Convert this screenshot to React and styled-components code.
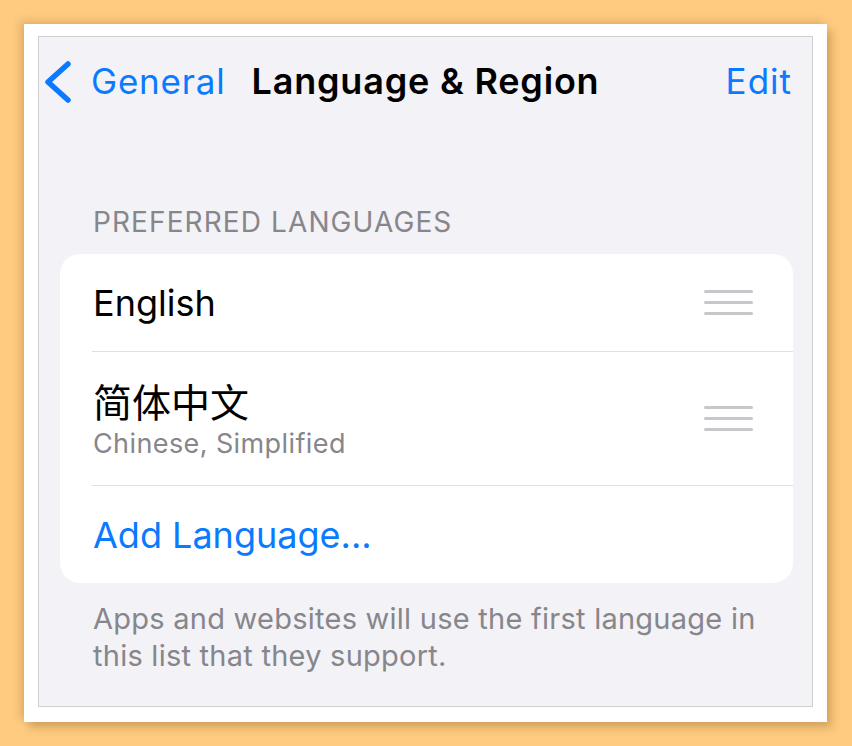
import React from "react"
import styled, { createGlobalStyle } from "styled-components"

const GlobalStyle = createGlobalStyle`
  html, body {
    margin: 0;
    padding: 0;
    background: #fecb80;
  }
  #root {
    height: 746px;
  }
  * {
    box-sizing: border-box;
  }
`

const Page = styled.div`
  width: 852px;
  height: 746px;
  padding: 24px 0 0 24px;
  font-family: Inter, "Noto Sans CJK SC", sans-serif;
`

const Frame = styled.div`
  width: 803px;
  height: 698px;
  background: #ffffff;
  padding: 12px 14px 15px 14px;
  box-shadow: -4px -3px 8px rgba(120, 80, 20, 0.22), 5px 6px 8px rgba(120, 80, 20, 0.28);
`

const Panel = styled.div`
  height: 100%;
  background: #f2f2f7;
  border: 1px solid #cfcfd2;
  display: flex;
  flex-direction: column;
`

const Header = styled.div`
  height: 88px;
  display: grid;
  grid-template-columns: 1fr auto 1fr;
  align-items: center;
  padding: 0 20px;
`

const BackButton = styled.div`
  display: flex;
  align-items: center;
  gap: 16px;
  margin-left: -14px;
  color: #0a7aff;
  font-size: 35px;
  letter-spacing: 0.8px;
`

const Title = styled.div`
  font-size: 36px;
  font-weight: 600;
  color: #000;
  letter-spacing: 0.8px;
`

const EditButton = styled.div`
  justify-self: end;
  color: #0a7aff;
  font-size: 35px;
  letter-spacing: 1px;
`

const SectionLabel = styled.div`
  margin: 79px 0 0 54px;
  font-size: 28px;
  line-height: 36px;
  color: #86868b;
  letter-spacing: 1.1px;
`

const Card = styled.div`
  margin: 14px 19px 0 21px;
  background: #ffffff;
  border-radius: 20px;
  overflow: hidden;
`

const Row = styled.div`
  height: ${(p) => p.$height}px;
  display: flex;
  align-items: center;
  justify-content: space-between;
  padding: 0 40px 0 33px;

  & + & {
    border-top: 1px solid #e0e0e3;
    margin-left: 32px;
    padding-left: 1px;
  }
`

const Labels = styled.div`
  display: flex;
  flex-direction: column;
`

const Primary = styled.div`
  font-size: ${(p) => (p.$cjk ? 39 : 36)}px;
  line-height: ${(p) => (p.$cjk ? 48 : 44)}px;
  color: ${(p) => (p.$link ? "#0a7aff" : "#000")};
  font-family: ${(p) => (p.$cjk ? '"Noto Sans CJK SC", sans-serif' : "Inter, sans-serif")};
`

const Secondary = styled.div`
  margin-top: 3px;
  font-size: 27px;
  line-height: 34px;
  color: #86868b;
  letter-spacing: 0.4px;
`

const Handle = styled.div`
  width: 49px;
  display: flex;
  flex-direction: column;
  gap: 8px;
`

const HandleLine = styled.span`
  display: block;
  height: 3px;
  border-radius: 2px;
  background: #c7c7cc;
`

const Footer = styled.div`
  margin: 17px 40px 0 54px;
  font-size: 29px;
  line-height: 37px;
  color: #86868b;
  letter-spacing: 0.25px;
`

const Chevron = () => (
  <svg width="30" height="46" viewBox="0 0 30 46">
    <polyline
      points="23,6 3,24 23,42"
      fill="none"
      stroke="#0a7aff"
      strokeWidth="5.5"
      strokeLinecap="round"
      strokeLinejoin="round"
    />
  </svg>
)

const DragHandle = () => (
  <Handle>
    <HandleLine />
    <HandleLine />
    <HandleLine />
  </Handle>
)

const App = () => {
  return (
    <Page>
      <GlobalStyle />
      <Frame>
        <Panel>
          <Header>
            <BackButton>
              <Chevron />
              General
            </BackButton>
            <Title>Language &amp; Region</Title>
            <EditButton>Edit</EditButton>
          </Header>
          <SectionLabel>PREFERRED LANGUAGES</SectionLabel>
          <Card>
            <Row $height={97}>
              <Labels>
                <Primary>English</Primary>
              </Labels>
              <DragHandle />
            </Row>
            <Row $height={134}>
              <Labels>
                <Primary $cjk>简体中文</Primary>
                <Secondary>Chinese, Simplified</Secondary>
              </Labels>
              <DragHandle />
            </Row>
            <Row $height={98}>
              <Labels>
                <Primary $link>Add Language...</Primary>
              </Labels>
            </Row>
          </Card>
          <Footer>
            Apps and websites will use the first language in this list that they support.
          </Footer>
        </Panel>
      </Frame>
    </Page>
  )
}

export default App
